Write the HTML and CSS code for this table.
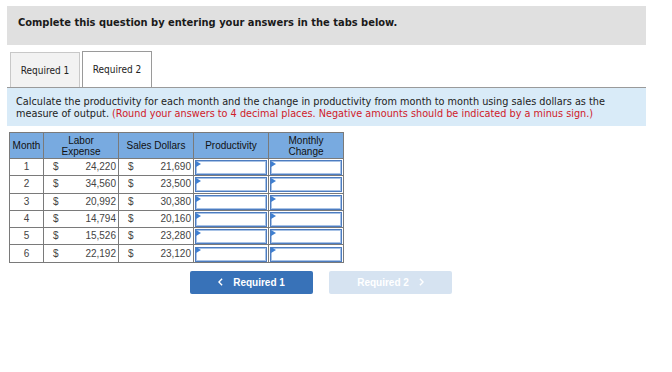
FILE: index.html
```html
<!DOCTYPE html>
<html>

<head>
  <meta charset="UTF-8">
  <meta name="viewport" content="width=device-width, initial-scale=1.0">
  <title>Productivity</title>
  <link rel="stylesheet" href="styles.css">
</head>

<body>
  <div class="question">
    <div class="question-head">Complete this question by entering your answers in the tabs below.</div>

    <div class="tabs">
      <div class="tab">Required 1</div>
      <div class="tab tab-active">Required 2</div>
    </div>

    <div class="prompt">
      Calculate the productivity for each month and the change in productivity from month to month using sales dollars as the<br>
      measure of output. <span class="prompt-note">(Round your answers to 4 decimal places. Negative amounts should be indicated by a minus sign.)</span>
    </div>

    <table class="sheet">
      <colgroup>
        <col class="col-month">
        <col class="col-cur">
        <col class="col-num">
        <col class="col-cur">
        <col class="col-num">
        <col class="col-input">
        <col class="col-input">
      </colgroup>
      <thead>
        <tr>
          <th>Month</th>
          <th colspan="2">Labor<br>Expense</th>
          <th colspan="2">Sales Dollars</th>
          <th>Productivity</th>
          <th>Monthly<br>Change</th>
        </tr>
      </thead>
      <tbody>
        <tr>
          <td class="month">1</td>
          <td class="cur">$</td><td class="num">24,220</td>
          <td class="cur">$</td><td class="num">21,690</td>
          <td class="entry"><span class="field"></span></td>
          <td class="entry"><span class="field"></span></td>
        </tr>
        <tr>
          <td class="month">2</td>
          <td class="cur">$</td><td class="num">34,560</td>
          <td class="cur">$</td><td class="num">23,500</td>
          <td class="entry"><span class="field"></span></td>
          <td class="entry"><span class="field"></span></td>
        </tr>
        <tr>
          <td class="month">3</td>
          <td class="cur">$</td><td class="num">20,992</td>
          <td class="cur">$</td><td class="num">30,380</td>
          <td class="entry"><span class="field"></span></td>
          <td class="entry"><span class="field"></span></td>
        </tr>
        <tr>
          <td class="month">4</td>
          <td class="cur">$</td><td class="num">14,794</td>
          <td class="cur">$</td><td class="num">20,160</td>
          <td class="entry"><span class="field"></span></td>
          <td class="entry"><span class="field"></span></td>
        </tr>
        <tr>
          <td class="month">5</td>
          <td class="cur">$</td><td class="num">15,526</td>
          <td class="cur">$</td><td class="num">23,280</td>
          <td class="entry"><span class="field"></span></td>
          <td class="entry"><span class="field"></span></td>
        </tr>
        <tr>
          <td class="month">6</td>
          <td class="cur">$</td><td class="num">22,192</td>
          <td class="cur">$</td><td class="num">23,120</td>
          <td class="entry"><span class="field"></span></td>
          <td class="entry"><span class="field"></span></td>
        </tr>
      </tbody>
    </table>

    <div class="nav">
      <button class="nav-btn nav-prev">
        <svg class="chev" viewBox="0 0 6 10"><path d="M5 1 1 5l4 4" /></svg>
        Required 1
      </button>
      <button class="nav-btn nav-next" disabled>
        Required 2
        <svg class="chev" viewBox="0 0 6 10"><path d="M1 1l4 4-4 4" /></svg>
      </button>
    </div>
  </div>
</body>

</html>
```

FILE: styles.css
```css
body {
  margin: 0;
  background: #fff;
  font-family: "DejaVu Sans Condensed", "DejaVu Sans", sans-serif;
  color: #222;
}

.question {
  width: 639px;
  padding: 6px 0 0 7px;
}

.question-head {
  height: 39px;
  padding: 0 11px;
  background: #e0e0e0;
  font-size: 11px;
  font-weight: bold;
  line-height: 33px;
  color: #1a1a1a;
}

.tabs {
  display: flex;
  gap: 2px;
  margin-top: 6px;
  padding-left: 3px;
  align-items: flex-end;
}

.tab {
  box-sizing: border-box;
  width: 70px;
  height: 35px;
  border: 1px solid #c8c8c8;
  border-bottom: none;
  background: #f2f2f2;
  font-size: 10px;
  line-height: 35px;
  text-align: center;
  color: #222;
}

.tab-active {
  height: 36px;
  border-color: #9a9a9a;
  background: #fff;
}

.prompt {
  height: 39px;
  box-sizing: border-box;
  padding: 8px 9px 0 9px;
  border-top: 1px solid #9a9a9a;
  background: #d9ebf8;
  font-size: 10.8px;
  line-height: 12px;
  white-space: nowrap;
  color: #222;
}

.prompt-note {
  color: #d0202a;
}

.sheet {
  margin: 6px 0 0 2px;
  border-collapse: collapse;
  table-layout: fixed;
  font-family: "Liberation Sans", Arial, sans-serif;
  font-size: 10px;
}

.col-month {
  width: 34px;
}

.col-cur {
  width: 20px;
}

.col-num {
  width: 55px;
}

.col-input {
  width: 75px;
}

.sheet th {
  height: 25px;
  padding: 0;
  border: 1px solid #7a7a7a;
  background: #78aae0;
  font-weight: normal;
  line-height: 11px;
  color: #111;
}

.sheet tbody tr {
  height: 17.3px;
}

.sheet td {
  padding: 0;
  border: 1px solid #7a7a7a;
  line-height: 16px;
  color: #444;
}

.sheet td.cur {
  padding-left: 9px;
  border-right: none;
  text-align: left;
}

.sheet td.num {
  padding-right: 2px;
  border-left: none;
  text-align: right;
}

.sheet td.month {
  text-align: center;
}

.sheet td.entry {
  position: relative;
  padding: 0 1px;
}

.field {
  display: block;
  box-sizing: border-box;
  height: 15px;
  margin-top: 1px;
  border: 1px solid #4d7cc0;
  box-shadow: inset 0 0 0 1px #a9c3e6;
  background: #fff;
}

/* little marker in the corner of each answer cell */
.entry::before {
  content: "";
  position: absolute;
  top: 2px;
  left: 2px;
  border-top: 3px solid transparent;
  border-bottom: 3px solid transparent;
  border-left: 5px solid #3f7fd0;
}

.nav {
  display: flex;
  gap: 16px;
  margin-top: 8px;
  padding-left: 183px;
}

.nav-btn {
  display: flex;
  align-items: center;
  justify-content: center;
  gap: 10px;
  width: 123px;
  height: 23px;
  padding: 0;
  border: none;
  border-radius: 2px;
  font-family: "Liberation Sans", Arial, sans-serif;
  font-size: 10px;
  font-weight: bold;
  color: #fff;
}

.nav-prev {
  background: #3872b8;
}

.nav-next {
  background: #d6e3f1;
}

.chev {
  width: 5px;
  height: 8px;
  fill: none;
  stroke: #fff;
  stroke-width: 1.8;
}
```
